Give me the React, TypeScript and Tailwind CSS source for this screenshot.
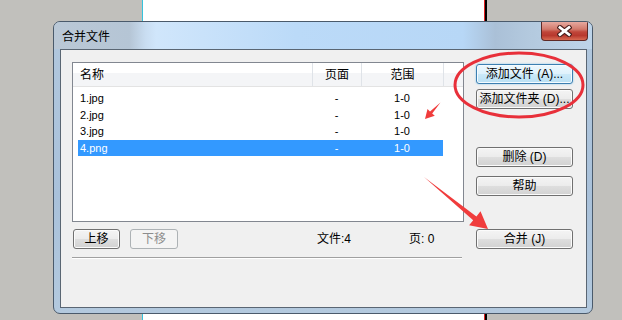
import type { ReactNode } from 'react';

type BtnKind = 'normal' | 'hot' | 'disabled';

const btnStyles: Record<BtnKind, string> = {
    normal:
        'border-[#707070] text-black bg-[linear-gradient(to_bottom,#f4f4f4_0%,#ececec_48%,#dedede_52%,#d2d2d2_100%)] shadow-[inset_0_0_0_1px_#fbfbfb]',
    hot:
        'border-[#3c7fb1] text-black bg-[linear-gradient(to_bottom,#eef8fd_0%,#dff2fc_48%,#cbe9f8_52%,#b9e0f4_100%)] shadow-[inset_0_0_0_1px_#f4fbff,0_0_2px_#7fc2ea]',
    disabled: 'border-[#adb2b5] text-[#8d8d8d] bg-[#f4f4f4]',
};

const WinButton = ({ children, kind = 'normal', className = '' }: { children: ReactNode; kind?: BtnKind; className?: string }) => (
    <div
        className={`flex items-center justify-center h-[20px] rounded-[3px] border whitespace-nowrap leading-none ${btnStyles[kind]} ${className}`}
    >
        {children}
    </div>
);

const files = [
    { name: '1.jpg', pages: '-', range: '1-0' },
    { name: '2.jpg', pages: '-', range: '1-0' },
    { name: '3.jpg', pages: '-', range: '1-0' },
    { name: '4.png', pages: '-', range: '1-0', selected: true },
];

const FileList = () => (
    <div className="w-[392px] h-[160px] border border-[#828790] bg-white flex flex-col">
        {/* column header */}
        <div className="flex h-[24px] border-b border-[#e3e3e3] bg-[linear-gradient(to_bottom,#ffffff_0%,#ffffff_42%,#f4f5f7_43%,#f4f5f7_100%)]">
            <div className="w-[240px] border-r border-[#dfe3e8] flex items-center pl-[7px]">名称</div>
            <div className="w-[49px] border-r border-[#dfe3e8] flex items-center justify-center">页面</div>
            <div className="w-[82px] border-r border-[#dfe3e8] flex items-center justify-center">范围</div>
            <div className="flex-1" />
        </div>

        <div className="pt-[3px] text-[11px]">
            {files.map((f) => (
                <div
                    key={f.name}
                    className={`ml-[5px] w-[365px] h-[16.5px] flex items-center ${f.selected ? 'bg-[#3399ff] text-white' : 'text-black'}`}
                >
                    <span className="w-[234px] pl-[2px]">{f.name}</span>
                    <span className="w-[49px] text-center">{f.pages}</span>
                    <span className="w-[82px] text-center">{f.range}</span>
                </div>
            ))}
        </div>
    </div>
);

const MergeDialog = () => (
    <div className="absolute left-[53px] top-[21px] w-[540px] h-[293px] rounded-[7px] border border-[#4a5a6b] bg-[linear-gradient(to_bottom,#b2c8de_0%,#a9c1da_60%,#b3c9de_100%)] flex flex-col overflow-hidden">
        {/* title bar */}
        <div className="h-[27px] flex items-start bg-[linear-gradient(to_right,#bac8d6_0%,#b5c5d5_14%,#c9ddf1_17%,#d0e6fb_19%,#bbdaf8_45%,#b7d7f6_76%,#aac0d7_82%,#b3c9de_88%,#bed4e9_100%)]">
            <span className="pl-[8px] pt-[6px] text-[12px] text-black">合并文件</span>
            <div className="ml-auto mr-[4px] w-[47px] h-[19px] rounded-b-[4px] border border-t-0 border-[#5e2a26] bg-[linear-gradient(to_bottom,#e6a99f_0%,#d27a6c_40%,#c0463a_55%,#b8392e_75%,#d86a52_100%)] flex items-center justify-center">
                <svg width="15" height="12" viewBox="0 0 15 12">
                    <path d="M3 2.5 L12 9.5 M12 2.5 L3 9.5" stroke="#4a1f1c" strokeWidth="5" strokeLinecap="square" />
                    <path d="M3 2.5 L12 9.5 M12 2.5 L3 9.5" stroke="#ffffff" strokeWidth="2.8" strokeLinecap="square" />
                </svg>
            </div>
        </div>

        {/* client area */}
        <div className="ml-[6px] mr-[5px] h-[259px] border border-[#5a6673] bg-[#f0f0f0] flex pl-[11px] pt-[12px]">
            <div className="flex flex-col w-[392px]">
                <FileList />
                <div className="flex items-center mt-[7px] h-[20px]">
                    <WinButton className="ml-[1px] w-[47px]">上移</WinButton>
                    <WinButton kind="disabled" className="ml-[10px] w-[48px]">下移</WinButton>
                    <span className="ml-[139px] w-[92px]">文件:4</span>
                    <span>页: 0</span>
                </div>
                <div className="mt-[8px] w-[390px] border-t border-[#a0a0a0] border-b border-b-white" />
            </div>

            <div className="ml-[12px] pt-[2px] flex flex-col w-[97px]">
                <WinButton kind="hot">添加文件 (A)...</WinButton>
                <WinButton className="mt-[5px]">添加文件夹 (D)...</WinButton>
                <WinButton className="mt-[38px]">删除 (D)</WinButton>
                <WinButton className="mt-[9px]">帮助</WinButton>
                <WinButton className="mt-[33px]">合并 (J)</WinButton>
            </div>
        </div>
    </div>
);

// red markup drawn over the screenshot
const Annotations = () => (
    <svg className="absolute inset-0 pointer-events-none" width="622" height="320" viewBox="0 0 622 320">
        <ellipse cx="519" cy="85" rx="64" ry="32" fill="none" stroke="#e8303a" strokeWidth="3" />
        <polygon
            points="440.5,102.5 432.2,113.4 434.8,115.8 425,119 427.5,109 430,111.4"
            fill="#f03c3c"
        />
        <polygon
            points="424,177 476.4,216.4 480.5,211.3 488,229 469.1,225.3 473.2,220.2"
            fill="#f03c3c"
        />
    </svg>
);

export default function App() {
    return (
        <div className="relative w-[622px] h-[320px] overflow-hidden flex text-[12px] text-black font-['Liberation_Sans','Noto_Sans_CJK_SC',sans-serif]">
            <div className="w-[142px] bg-[#c1c0bc]" />
            <div className="w-px bg-[#35c3dd]" />
            <div className="w-[341px] bg-white" />
            <div className="w-px bg-[#e02020]" />
            <div className="w-[2px] bg-black" />
            <div className="flex-1 bg-[#c1c0bc]" />
            <MergeDialog />
            <Annotations />
        </div>
    );
}
